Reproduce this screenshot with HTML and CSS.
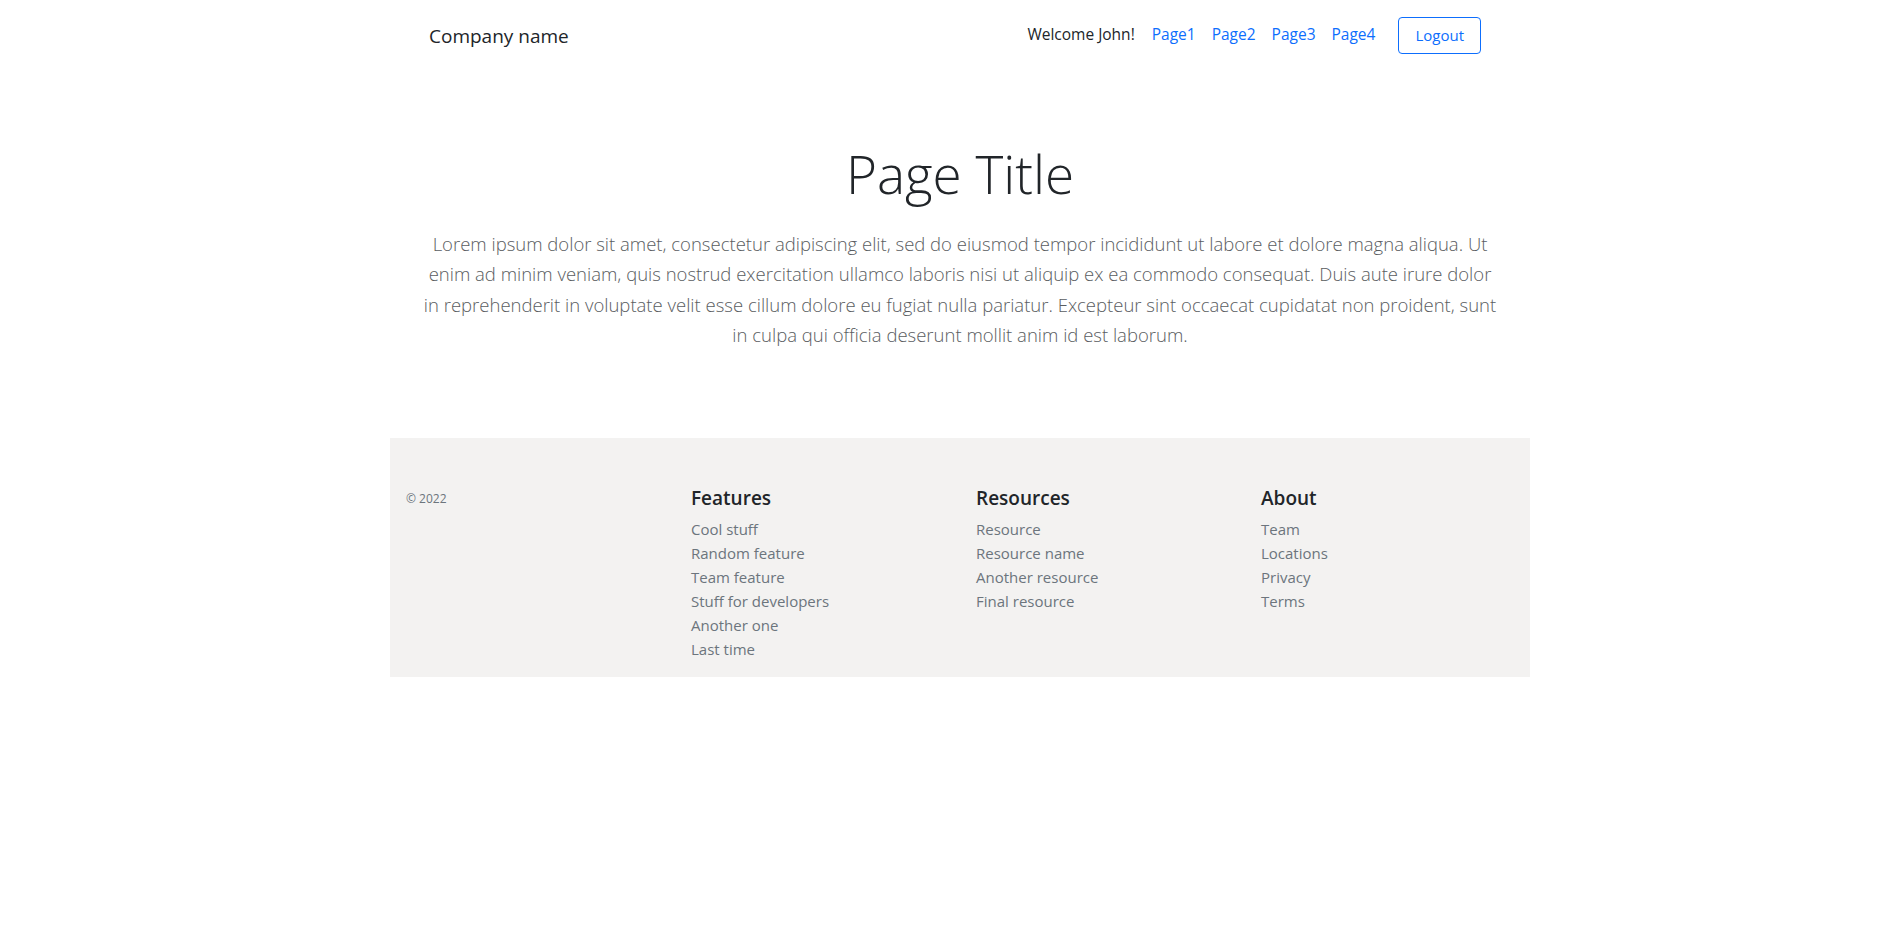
FILE: index.html
```html
<!DOCTYPE html>
<html lang="en">
<head>
<meta charset="utf-8">
<title>Company name</title>
<link rel="stylesheet" href="styles.css">
</head>
<body>
<div class="page">
  <header class="header">
    <a class="brand" href="#">Company name</a>
    <nav class="nav">
      <span class="welcome">Welcome John!</span>
      <a class="nav-link" href="#">Page1</a>
      <a class="nav-link" href="#">Page2</a>
      <a class="nav-link" href="#">Page3</a>
      <a class="nav-link" href="#">Page4</a>
      <a class="btn-outline" href="#">Logout</a>
    </nav>
  </header>

  <main class="hero">
    <h1 class="display">Page Title</h1>
    <p class="lead">Lorem ipsum dolor sit amet, consectetur adipiscing elit, sed do eiusmod tempor incididunt ut labore et dolore magna aliqua. Ut enim ad minim veniam, quis nostrud exercitation ullamco laboris nisi ut aliquip ex ea commodo consequat. Duis aute irure dolor in reprehenderit in voluptate velit esse cillum dolore eu fugiat nulla pariatur. Excepteur sint occaecat cupidatat non proident, sunt in culpa qui officia deserunt mollit anim id est laborum.</p>
  </main>

  <footer class="footer">
    <div class="col">
      <small class="copy">© 2022</small>
    </div>
    <div class="col">
      <h5 class="col-title">Features</h5>
      <ul class="links">
        <li><a href="#">Cool stuff</a></li>
        <li><a href="#">Random feature</a></li>
        <li><a href="#">Team feature</a></li>
        <li><a href="#">Stuff for developers</a></li>
        <li><a href="#">Another one</a></li>
        <li><a href="#">Last time</a></li>
      </ul>
    </div>
    <div class="col">
      <h5 class="col-title">Resources</h5>
      <ul class="links">
        <li><a href="#">Resource</a></li>
        <li><a href="#">Resource name</a></li>
        <li><a href="#">Another resource</a></li>
        <li><a href="#">Final resource</a></li>
      </ul>
    </div>
    <div class="col">
      <h5 class="col-title">About</h5>
      <ul class="links">
        <li><a href="#">Team</a></li>
        <li><a href="#">Locations</a></li>
        <li><a href="#">Privacy</a></li>
        <li><a href="#">Terms</a></li>
      </ul>
    </div>
  </footer>
</div>
</body>
</html>
```

FILE: styles.css
```css
* { box-sizing: border-box; }

body {
  margin: 0;
  padding-left: 17px;
  font-family: "Open Sans", "Noto Sans", sans-serif;
  font-size: 16px;
  line-height: 1.5;
  color: #212529;
  background: #fff;
}

a { text-decoration: none; }

.page {
  width: 1140px;
  margin: 0 auto;
}

.header {
  display: flex;
  align-items: center;
  justify-content: space-between;
  padding: 16px 49px 0 39px;
  height: 38px;
  box-sizing: content-box;
}

.brand {
  font-size: 19px;
  color: #212529;
  line-height: 1.2;
  margin-top: 2px;
}

.nav {
  display: flex;
  align-items: center;
  font-size: 15.5px;
}

.welcome {
  color: #212529;
  margin-right: 9px;
}

.nav-link {
  color: #0d6efd;
  padding: 0 8px;
}

.btn-outline {
  margin-left: 15px;
  display: inline-block;
  color: #0d6efd;
  border: 1px solid #0d6efd;
  border-radius: 4px;
  padding: 6px 16px;
  line-height: 23px;
  font-size: 15px;
}

.hero {
  text-align: center;
  padding: 88px 32px 0;
}

.display {
  margin: 0 0 23px;
  font-size: 53px;
  font-weight: 300;
  line-height: 1.2;
  color: #212529;
}

.lead {
  margin: 0;
  font-size: 18.5px;
  font-weight: 300;
  line-height: 30.5px;
  color: #5a5d61;
}

.footer {
  margin-top: 87px;
  background: #f3f2f1;
  display: grid;
  grid-template-columns: repeat(4, 1fr);
  padding-top: 48px;
}

.col {
  padding-left: 16px;
}

.copy {
  display: block;
  font-size: 12px;
  line-height: 18px;
  color: #6c757d;
  margin-top: 4px;
}

.col-title {
  margin: 0 0 7px;
  font-size: 19px;
  font-weight: 600;
  line-height: 24px;
  color: #212529;
}

.links {
  list-style: none;
  margin: 0 0 16px;
  padding: 0;
  font-size: 15px;
  line-height: 24px;
}

.links a {
  color: #6c757d;
}
```
